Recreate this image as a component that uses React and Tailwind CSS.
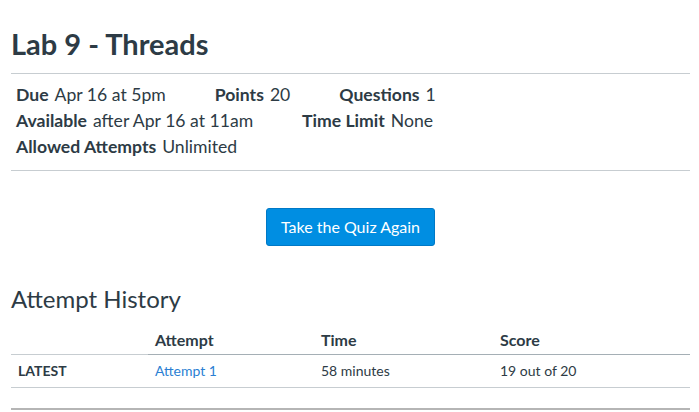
export default function App() {
  const details = [
    [
      ['Due', 'Apr 16 at 5pm'],
      ['Points', '20'],
      ['Questions', '1'],
    ],
    [
      ['Available', 'after Apr 16 at 11am'],
      ['Time Limit', 'None'],
    ],
    [['Allowed Attempts', 'Unlimited']],
  ];

  return (
    <div className="min-h-screen bg-white font-['Lato','Liberation_Sans',sans-serif] text-[#2d3b45]">
      <div className="ml-[11px] w-[679px]">
        <h1 className="pt-[28px] text-[29px] font-bold leading-[32px]">Lab 9 - Threads</h1>

        <div className="mt-[13px] border-t border-[#c7cdd1] pt-[8px] pb-[10px] pl-[5px]">
          {details.map((row, i) => (
            <div key={i} className="flex gap-[49px] text-[17.6px] leading-[26px]">
              {row.map(([label, value]) => (
                <div key={label} className="flex gap-[6px]">
                  <span className="font-bold">{label}</span>
                  <span>{value}</span>
                </div>
              ))}
            </div>
          ))}
        </div>

        <div className="flex justify-center border-t border-[#c7cdd1] pt-[37px]">
          <button className="h-[38px] w-[169px] rounded-[3px] border border-[#0079c6] bg-[#008ee2] text-[16px] text-white">
            Take the Quiz Again
          </button>
        </div>

        <h2 className="mt-[38px] text-[24px] font-normal leading-[30px]">Attempt History</h2>

        <table className="w-full border-collapse text-left">
          <thead>
            <tr className="text-[16px] font-bold leading-[20px]">
              <th className="w-[137px] border-b border-[#c7cdd1] pt-[16px] pb-[4px]"></th>
              <th className="w-[166px] border-b border-[#a5afb5] px-[7px] pt-[16px] pb-[4px]">Attempt</th>
              <th className="w-[179px] border-b border-[#a5afb5] px-[7px] pt-[16px] pb-[4px]">Time</th>
              <th className="border-b border-[#a5afb5] px-[7px] pt-[16px] pb-[4px]">Score</th>
            </tr>
          </thead>
          <tbody>
            <tr className="text-[14px] leading-[20px]">
              <td className="border-b border-[#c7cdd1] px-[7px] py-[6px] font-bold">LATEST</td>
              <td className="border-b border-[#c7cdd1] px-[7px] py-[6px]">
                <a className="text-[#2b7fd3]">Attempt 1</a>
              </td>
              <td className="border-b border-[#c7cdd1] px-[7px] py-[6px]">58 minutes</td>
              <td className="border-b border-[#c7cdd1] px-[7px] py-[6px]">19 out of 20</td>
            </tr>
          </tbody>
        </table>

        <div className="mt-[20px] border-t-2 border-[#b5b5b5]"></div>
      </div>
    </div>
  );
}
